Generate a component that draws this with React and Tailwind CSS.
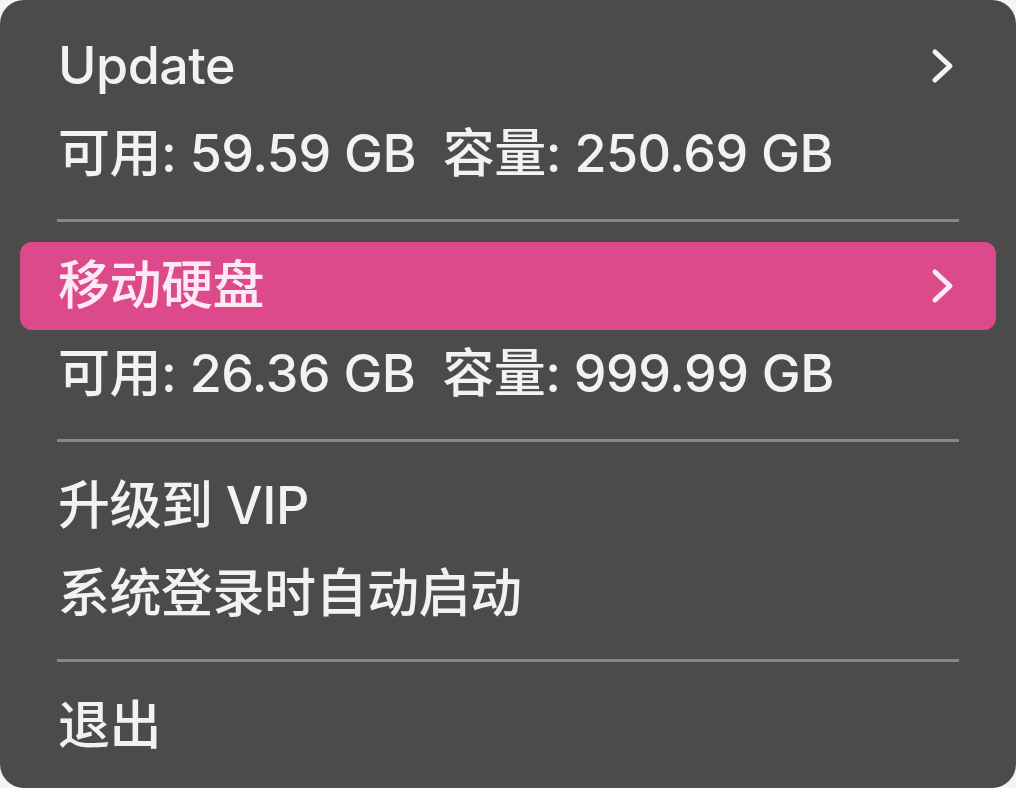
const font = { fontFamily: 'Inter, "Noto Sans CJK SC", "Noto Sans", sans-serif' }

function Chevron() {
    return (
        <svg width="26" height="38" viewBox="0 0 26 38" fill="none" className="shrink-0">
            <path d="M5 5 L20 19 L5 33" stroke="currentColor" strokeWidth="5" strokeLinecap="round" strokeLinejoin="round" />
        </svg>
    )
}

function Item({ label, arrow, active }) {
    return (
        <div className="px-[20px]">
            <div className={`h-[88px] flex items-center justify-between pl-[38px] pr-[40px] rounded-[12px] ${active ? 'bg-[#dd4a8b] text-[#fbe9f3]' : 'text-[#f2f2f2]'}`}>
                <span className="whitespace-pre">{label}</span>
                {arrow && <Chevron />}
            </div>
        </div>
    )
}

function Separator() {
    return (
        <div className="h-[44px] flex items-center px-[57px]">
            <div className="h-[3px] w-full bg-[#878787]" />
        </div>
    )
}

export default function App() {
    return (
        <div className="w-[1016px] h-[788px] bg-[#f4f4f4]" style={font}>
            <div className="w-full h-full bg-[#4b4b4b] rounded-[24px] pt-[22px] text-[52px] font-medium leading-none tracking-[-0.5px] overflow-hidden">
                <Item label="Update" arrow />
                <Item label="可用: 59.59 GB  容量: 250.69 GB" />
                <Separator />
                <Item label="移动硬盘" arrow active />
                <Item label="可用: 26.36 GB  容量: 999.99 GB" />
                <Separator />
                <Item label="升级到 VIP" />
                <Item label="系统登录时自动启动" />
                <Separator />
                <Item label="退出" />
            </div>
        </div>
    )
}
